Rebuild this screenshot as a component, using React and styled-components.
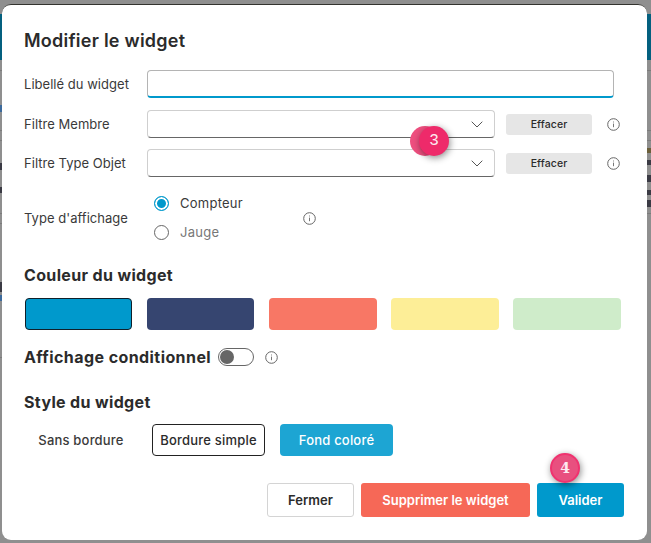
import React from 'react'
import styled, { createGlobalStyle } from 'styled-components'

const Global = createGlobalStyle`
  html, body { margin: 0; padding: 0; }
  body { font-family: Inter, "Liberation Sans", sans-serif; color: #2b2b2b; }
`

const Page = styled.div`
  position: relative;
  width: 651px;
  height: 543px;
  overflow: hidden;
  padding: 4px 4px 3px 2px;
  box-sizing: border-box;
  background: #8f8f8f;
`

const Strip = styled.div`
  position: absolute;
  top: ${p => p.top}px;
  height: ${p => p.h}px;
  width: 5px;
  left: ${p => (p.right ? 646 : 0)}px;
  background: ${p => p.color};
`

const Modal = styled.div`
  position: relative;
  height: 536px;
  box-sizing: border-box;
  padding: 0 26px 0 22px;
  background: #fff;
  border-top: 1px solid #33332f;
  border-radius: 9px;
`

const Title = styled.h1`
  margin: 0 0 15px;
  padding-top: 22px;
  height: 28px;
  font-size: 18px;
  line-height: 28px;
  font-weight: 600;
  color: #2b2b2b;
  letter-spacing: 0.25px;
  box-sizing: content-box;
`

const Row = styled.div`
  display: flex;
  align-items: center;
  margin-top: ${p => p.mt || 0}px;
`

const Label = styled.label`
  width: 123px;
  flex: none;
  font-size: 13px;
  letter-spacing: 0.03px;
  color: #3a3a3a;
`

const TextInput = styled.input`
  width: 467px;
  height: 28px;
  box-sizing: border-box;
  background: #fff;
  border: 1px solid #b4b4b4;
  border-bottom: 2px solid #0099cc;
  border-radius: 4px;
  outline: none;
`

const Select = styled.div`
  display: flex;
  align-items: center;
  justify-content: flex-end;
  width: 348px;
  height: 28px;
  box-sizing: border-box;
  padding-right: 11px;
  border: 1px solid #cfcfcf;
  border-bottom: 1px solid #666;
  border-radius: 4px;
`

const ClearButton = styled.button`
  width: 86px;
  height: 21px;
  margin-left: 11px;
  padding: 0;
  border: none;
  border-radius: 3px;
  background: #e6e6e6;
  font: 500 10.5px Inter, sans-serif;
  letter-spacing: 0.1px;
  color: #2b2b2b;
`

const InfoWrap = styled.span`
  display: inline-flex;
  flex: none;
  margin-left: ${p => p.ml}px;
`

const RadioGroup = styled.div`
  display: flex;
  flex-direction: column;
  width: 148px;
`

const RadioRow = styled.div`
  display: flex;
  align-items: center;
  height: 29px;
  padding-left: 7px;
  font-size: 13px;
  letter-spacing: 0.25px;
  color: ${p => (p.on ? '#3a3a3a' : '#777')};
`

const RadioText = styled.span`
  margin-top: -1px;
`

const RadioDot = styled.span`
  width: 15px;
  height: 15px;
  margin-right: 11px;
  box-sizing: border-box;
  border-radius: 50%;
  border: 1px solid ${p => (p.on ? '#0099cc' : '#666')};
  background: ${p => (p.on ? '#0099cc' : '#fff')};
  box-shadow: ${p => (p.on ? 'inset 0 0 0 2px #fff' : 'none')};
`

const Heading = styled.h2`
  margin: ${p => p.mt}px 0 0;
  height: 24px;
  font-size: 16px;
  line-height: 25px;
  font-weight: 700;
  letter-spacing: 0.35px;
  color: #2b2b2b;
`

const Swatches = styled.div`
  display: grid;
  grid-template-columns: repeat(5, 1fr);
  gap: 14.5px;
  width: 596.5px;
  margin: 11px 0 0 0.5px;
`

const Swatch = styled.div`
  height: 32px;
  box-sizing: border-box;
  border-radius: 4px;
  background: ${p => p.color};
  border: ${p => (p.active ? '1px solid #10202a' : 'none')};
`

const InlineHeading = styled.span`
  font-size: 16px;
  line-height: 22px;
  font-weight: 700;
  letter-spacing: 0.42px;
  color: #2b2b2b;
`

const Toggle = styled.span`
  display: flex;
  align-items: center;
  width: 36px;
  height: 18px;
  margin-left: 7px;
  padding-left: 1px;
  box-sizing: border-box;
  border: 1px solid #666;
  border-radius: 9px;
`

const Knob = styled.span`
  width: 14px;
  height: 14px;
  border-radius: 50%;
  background: #666;
`

const StyleRow = styled.div`
  display: flex;
  align-items: center;
  margin-top: 10px;
  height: 32px;
`

const StyleOption = styled.button`
  width: ${p => p.w}px;
  height: 32px;
  margin-left: ${p => p.ml}px;
  padding: 0;
  box-sizing: border-box;
  border-radius: 4px;
  font: 500 13px Inter, sans-serif;
  letter-spacing: 0.2px;
  color: ${p => p.fg};
  background: ${p => p.bg};
  border: ${p => (p.outlined ? '1px solid #222' : 'none')};
`

const Footer = styled.div`
  display: flex;
  justify-content: flex-end;
  gap: 7px;
  margin: 27px -3px 0 0;
`

const FooterButton = styled.button`
  width: ${p => p.w}px;
  height: 34px;
  padding: 0;
  box-sizing: border-box;
  border-radius: 3px;
  font: 600 13px Inter, sans-serif;
  color: ${p => p.fg};
  background: ${p => p.bg};
  border: ${p => (p.outlined ? '1px solid #d4d4d4' : 'none')};
`

const Step = styled.span`
  position: absolute;
  left: ${p => p.x}px;
  top: ${p => p.y}px;
  display: flex;
  align-items: center;
  justify-content: center;
  width: 30px;
  height: 30px;
  box-sizing: border-box;
  border-radius: 50%;
  background: ${p => p.bg};
  border: ${p => (p.ring ? '2px solid #f0326f' : 'none')};
  box-shadow: 1px 2px 7px rgba(0, 0, 0, ${p => (p.ghost ? 0 : 0.45)});
  color: #fdeaf0;
  font: ${p => p.font};
`

const Info = () => (
  <svg width="13" height="13" viewBox="0 0 13 13" fill="none">
    <circle cx="6.5" cy="6.5" r="5.8" stroke="#666" strokeWidth="1" />
    <path d="M6.5 5.6v3.6" stroke="#777" strokeWidth="1" />
    <path d="M6.5 3.4v1.2" stroke="#999" strokeWidth="1" />
  </svg>
)

const Chevron = () => (
  <svg width="12" height="7" viewBox="0 0 12 7" fill="none">
    <path d="M.7.7 6 6l5.3-5.3" stroke="#555" strokeWidth="1" />
  </svg>
)

const SWATCHES = ['#0099cc', '#364570', '#f87765', '#fdee97', '#cfecca']

// what shows of the page behind the overlay, on either side of the modal
const LEFT_BITS = [
  [14, 46, '#04607f'], [70, 1, '#7b7b7b'], [105, 7, '#3c6a9c'], [130, 1, '#7b7b7b'],
  [140, 1, '#7b7b7b'], [163, 7, '#3a3a44'], [187, 6, '#3a3a44'], [213, 1, '#7b7b7b'],
  [223, 1, '#7b7b7b'], [282, 10, '#3a3a44'], [295, 6, '#3c6a9c'], [357, 1, '#7b7b7b'],
]
const RIGHT_BITS = [
  [14, 46, '#04607f'], [70, 1, '#7b7b7b'], [130, 1, '#7b7b7b'], [140, 1, '#7b7b7b'],
  [148, 5, '#6b5f3a'], [160, 5, '#3a3a44'], [175, 7, '#3a3a44'], [190, 5, '#3a3a44'],
  [200, 7, '#3a3a44'], [213, 1, '#7b7b7b'],
]

export default function App() {
  return (
    <Page>
      <Global />
      {LEFT_BITS.map(([t, h, c]) => <Strip key={t} top={t} h={h} color={c} />)}
      {RIGHT_BITS.map(([t, h, c]) => <Strip key={t} top={t} h={h} color={c} right />)}
      <Modal>
        <Title>Modifier le widget</Title>
        <Row>
          <Label>Libellé du widget</Label>
          <TextInput />
        </Row>
        <Row mt={12}>
          <Label>Filtre Membre</Label>
          <Select><Chevron /></Select>
          <ClearButton>Effacer</ClearButton>
          <InfoWrap ml={15}><Info /></InfoWrap>
        </Row>
        <Row mt={11}>
          <Label>Filtre Type Objet</Label>
          <Select><Chevron /></Select>
          <ClearButton>Effacer</ClearButton>
          <InfoWrap ml={15}><Info /></InfoWrap>
        </Row>
        <Row mt={12}>
          <Label>Type d'affichage</Label>
          <RadioGroup>
            <RadioRow on><RadioDot on /><RadioText>Compteur</RadioText></RadioRow>
            <RadioRow><RadioDot /><RadioText>Jauge</RadioText></RadioRow>
          </RadioGroup>
          <InfoWrap ml={8}><Info /></InfoWrap>
        </Row>
        <Heading mt={16}>Couleur du widget</Heading>
        <Swatches>
          {SWATCHES.map((c, i) => <Swatch key={c} color={c} active={i === 0} />)}
        </Swatches>
        <Row mt={16}>
          <InlineHeading>Affichage conditionnel</InlineHeading>
          <Toggle><Knob /></Toggle>
          <InfoWrap ml={11}><Info /></InfoWrap>
        </Row>
        <Heading mt={22}>Style du widget</Heading>
        <StyleRow>
          <StyleOption w={114} ml={0} fg="#3a3a3a" bg="#fff">Sans bordure</StyleOption>
          <StyleOption w={113} ml={14} fg="#2b2b2b" bg="#fff" outlined>Bordure simple</StyleOption>
          <StyleOption w={113} ml={15} fg="#fff" bg="#1da5d3">Fond coloré</StyleOption>
        </StyleRow>
        <Footer>
          <FooterButton w={87} fg="#2b2b2b" bg="#fff" outlined>Fermer</FooterButton>
          <FooterButton w={169} fg="#fff" bg="#f66857">Supprimer le widget</FooterButton>
          <FooterButton w={87} fg="#fff" bg="#0099cc">Valider</FooterButton>
        </Footer>
      </Modal>
      <Step x={410} y={126} bg="#ee4f7f" ghost />
      <Step x={419} y={126} bg="#ee2a6a" font='400 16px "Liberation Mono", monospace'>3</Step>
      <Step x={550} y={453} bg="#e8507f" ring font='700 14px "DejaVu Serif", serif'>4</Step>
    </Page>
  )
}
